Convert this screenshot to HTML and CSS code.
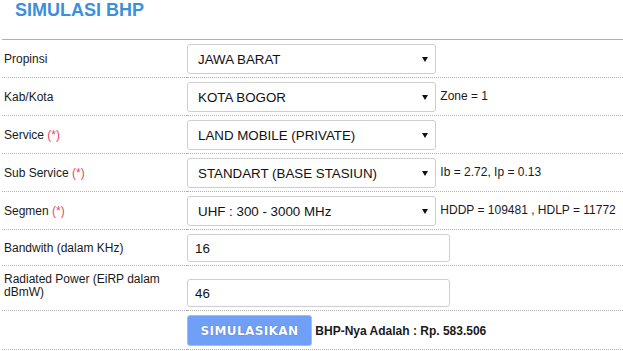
FILE: index.html
```html
<!DOCTYPE html>
<html lang="id">
<head>
  <meta charset="UTF-8">
  <title>Simulasi BHP</title>
  <link rel="stylesheet" href="styles.css">
</head>
<body>

  <div class="panel">
    <h1>SIMULASI BHP</h1>

    <table class="form">
      <tr>
        <td class="label">Propinsi</td>
        <td class="field">
          <span class="dropdown"><select><option>JAWA BARAT</option></select></span>
        </td>
      </tr>
      <tr>
        <td class="label">Kab/Kota</td>
        <td class="field">
          <span class="dropdown"><select><option>KOTA BOGOR</option></select></span>
          <span class="note">Zone = 1</span>
        </td>
      </tr>
      <tr>
        <td class="label">Service <span class="req">(*)</span></td>
        <td class="field">
          <span class="dropdown"><select><option>LAND MOBILE (PRIVATE)</option></select></span>
        </td>
      </tr>
      <tr>
        <td class="label">Sub Service <span class="req">(*)</span></td>
        <td class="field">
          <span class="dropdown"><select><option>STANDART (BASE STASIUN)</option></select></span>
          <span class="note">Ib = 2.72, Ip = 0.13</span>
        </td>
      </tr>
      <tr>
        <td class="label">Segmen <span class="req">(*)</span></td>
        <td class="field">
          <span class="dropdown"><select><option>UHF : 300 - 3000 MHz</option></select></span>
          <span class="note">HDDP = 109481 , HDLP = 11772</span>
        </td>
      </tr>
      <tr>
        <td class="label">Bandwith (dalam KHz)</td>
        <td class="field"><input type="text" value="16"></td>
      </tr>
      <tr class="tall">
        <td class="label">Radiated Power (EiRP dalam<br>dBmW)</td>
        <td class="field"><input type="text" value="46"></td>
      </tr>
      <tr>
        <td class="label"></td>
        <td class="field">
          <button type="button">SIMULASIKAN</button>
          <span class="result">BHP-Nya Adalah : Rp. 583.506</span>
        </td>
      </tr>
    </table>
  </div>

</body>
</html>
```

FILE: styles.css
```css
body {
  margin: 0;
  background-color: #ffffff;
  font-family: "Liberation Sans", Arial, sans-serif;
  color: #1a1a1a;
}
.panel {
  margin-left: 2px;
}
h1 {
  margin: 0;
  height: 39px;
  padding: 0 13px;
  font-size: 18px;
  line-height: 21px;
  color: #3d8fdc;
  border-bottom: 1px solid #8db6ee;
}
.form {
  width: 100%;
  border-collapse: collapse;
}
.form td {
  padding: 4px 0 3px;
  border-bottom: 1px dotted #b3b3b3;
  vertical-align: middle;
}
.label {
  width: 183px;
  padding-left: 2px !important;
  font-size: 12px;
  line-height: 13px;
}
.req {
  color: #e8475f;
}
.field {
  font-size: 12px;
}
.tall .label {
  vertical-align: top !important;
  padding-top: 7px !important;
}
.tall .field {
  padding-top: 13px;
}
.dropdown {
  position: relative;
  display: inline-block;
  vertical-align: middle;
}
.dropdown::after {
  content: "";
  position: absolute;
  right: 8px;
  top: 13px;
  border-left: 3px solid transparent;
  border-right: 3px solid transparent;
  border-top: 5px solid #111;
}
select {
  -webkit-appearance: none;
  appearance: none;
  display: block;
  width: 249px;
  height: 30px;
  padding: 0 24px 0 10px;
  border: 1px solid #cfcfcf;
  border-radius: 3px;
  background-color: #ffffff;
  font-family: "Liberation Sans", Arial, sans-serif;
  font-size: 13.33px;
  color: #111;
}
.note {
  display: inline-block;
  vertical-align: middle;
  margin-left: 1px;
  margin-top: -3px;
}
input {
  display: block;
  width: 263px;
  height: 28px;
  padding: 0 7px;
  box-sizing: border-box;
  border: 1px solid #cfcfcf;
  border-radius: 3px;
  font-family: "Liberation Sans", Arial, sans-serif;
  font-size: 13.33px;
  color: #111;
}
button {
  vertical-align: middle;
  width: 125px;
  height: 31px;
  border: 1px solid #93c3ff;
  border-radius: 3px;
  background-color: #709ff7;
  color: #ffffff;
  font-family: "DejaVu Sans", Verdana, sans-serif;
  font-size: 12px;
  font-weight: bold;
  letter-spacing: 0.4px;
  text-shadow: 0 0 1px #3d5fa8;
  cursor: pointer;
}
.result {
  vertical-align: middle;
  margin-left: 0;
  font-weight: bold;
}
```
